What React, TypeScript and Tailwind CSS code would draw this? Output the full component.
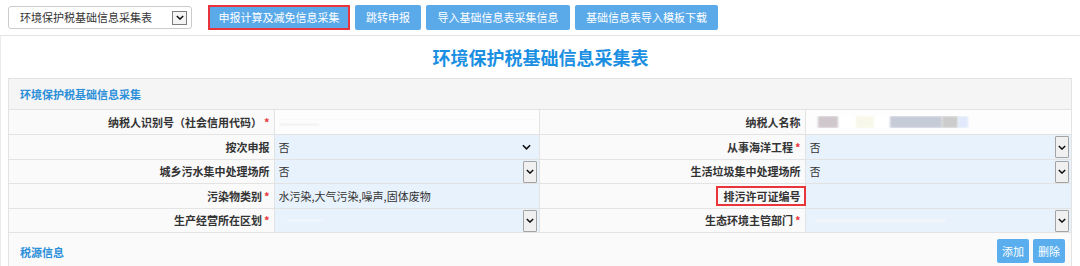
import React from 'react';

const Chevron = ({ className = '' }: { className?: string }) => (
  <svg viewBox="0 0 10 6" className={className} fill="none" stroke="#111" strokeWidth="1.8">
    <path d="M1 1l4 4 4-4" />
  </svg>
);

const BoxArrow = () => (
  <div className="w-[14px] h-[22px] border border-[#a3a3a3] bg-[#f0f0f0] flex items-center justify-center rounded-[1px]">
    <Chevron className="w-[8px] h-[5px]" />
  </div>
);

const Star = () => <span className="text-[#e8343a] ml-[2px]">*</span>;

type Cell = {
  label: React.ReactNode;
  star?: boolean;
  value?: React.ReactNode;
  kind?: 'blank' | 'text' | 'select' | 'plain';
  white?: boolean;
};

const Label = ({ cell }: { cell: Cell }) => (
  <div className="bg-[#fafafa] border-r border-[#e3e3e3] flex items-center justify-end pr-[4px] font-bold text-[#333]">
    {cell.label}
    {cell.star && <Star />}
  </div>
);

const Value = ({ cell, last }: { cell: Cell; last?: boolean }) => (
  <div
    className={`${cell.white ? 'bg-[#fdfdfd]' : 'bg-[#e8f2fc]'} ${last ? '' : 'border-r border-[#e3e3e3]'} flex items-center pl-[4px] pr-[2px] relative`}
  >
    <div className="flex-1 truncate">{cell.value}</div>
    {cell.kind === 'select' && <BoxArrow />}
    {cell.kind === 'plain' && <Chevron className="w-[9px] h-[6px] mr-[6px]" />}
  </div>
);

const rows: { h: string; left: Cell; right: Cell }[] = [
  {
    h: 'h-[25px]',
    left: {
      label: '纳税人识别号（社会信用代码）',
      star: true,
      white: true,
      value: (
        <div className="flex flex-col gap-[6px] -mt-[4px]">
          <div className="h-[3px] w-[290px] bg-[#e4e4e4] blur-[1.5px]" />
          <div className="h-[2px] w-[40px] bg-[#eeeeee] blur-[1px]" />
        </div>
      ),
    },
    right: {
      label: '纳税人名称',
      white: true,
      value: (
        <div className="flex items-center gap-0 ml-[8px]">
          <div className="w-[20px] h-[12px] bg-[#cfc7cc] blur-[1px]" />
          <div className="w-[18px] h-[12px] bg-[#ffffff]" />
          <div className="w-[18px] h-[12px] bg-[#f8f8ea] blur-[1px]" />
          <div className="w-[16px] h-[12px] bg-[#ffffff]" />
          <div className="w-[52px] h-[12px] bg-[#c6cbd8] blur-[1px]" />
          <div className="w-[16px] h-[12px] bg-[#cccccc] blur-[1px]" />
          <div className="w-[10px] h-[12px] bg-[#dfe9fb] blur-[1px]" />
        </div>
      ),
    },
  },
  {
    h: 'h-[25px]',
    left: { label: '按次申报', value: '否', kind: 'plain' },
    right: { label: '从事海洋工程', star: true, value: '否', kind: 'select' },
  },
  {
    h: 'h-[24px]',
    left: { label: '城乡污水集中处理场所', value: '否', kind: 'select' },
    right: { label: '生活垃圾集中处理场所', value: '否', kind: 'select' },
  },
  {
    h: 'h-[25px]',
    left: { label: '污染物类别', star: true, value: '水污染,大气污染,噪声,固体废物' },
    right: {
      label: (
        <span className="border-2 border-[#e8343a] pl-[6px] pr-[3px] leading-[14px] py-[1px] -mr-[5px]">排污许可证编号</span>
      ),
    },
  },
  {
    h: 'h-[24px]',
    left: {
      label: '生产经营所在区划',
      star: true,
      kind: 'select',
      value: <div className="h-[3px] w-[36px] ml-[8px] bg-[#f2f6fb] blur-[1px]" />,
    },
    right: {
      label: '生态环境主管部门',
      star: true,
      kind: 'select',
      value: <div className="h-[4px] w-[130px] ml-[6px] bg-[#f3f6fa] blur-[1.5px]" />,
    },
  },
];

const TopButton = ({ w, children }: { w: string; children: React.ReactNode }) => (
  <button className={`${w} h-[25px] bg-[#5aaaea] text-white rounded-[2px] text-[11px]`}>{children}</button>
);

export default function App() {
  return (
    <div className="w-[1080px] h-[266px] overflow-hidden bg-white text-[11px] text-[#333] font-['Noto_Sans_CJK_SC',sans-serif]">
      {/* Toolbar */}
      <div className="h-[36px] border-b border-[#e3e3e3] flex items-center pl-[8px] gap-[5px]">
        <div className="w-[184px] h-[23px] border border-[#cbcbcb] rounded-[3px] flex items-center justify-between pl-[11px] pr-[4px] mr-[11px]">
          <span>环境保护税基础信息采集表</span>
          <div className="w-[15px] h-[14px] border border-[#7d7d7d] bg-[#f4f4f4] flex items-center justify-center">
            <Chevron className="w-[8px] h-[5px]" />
          </div>
        </div>
        <div className="w-[142px] h-[25px] border-2 border-[#e8343a] bg-[#5aaaea] text-white flex items-center justify-center">
          申报计算及减免信息采集
        </div>
        <TopButton w="w-[66px]">跳转申报</TopButton>
        <TopButton w="w-[144px]">导入基础信息表采集信息</TopButton>
        <TopButton w="w-[143px]">基础信息表导入模板下载</TopButton>
      </div>

      <div className="border-l border-[#ebebeb] h-[230px]">
        {/* Title */}
        <div className="h-[42px] flex items-center justify-center text-[18px] font-bold text-[#1b8fe2]">
          环境保护税基础信息采集表
        </div>

        {/* Panel */}
        <div className="ml-[7px] w-[1064px] border border-[#e3e3e3]">
          <div className="h-[31px] bg-[#f5f5f5] border-b border-[#e3e3e3] flex items-center pl-[11px] font-bold text-[#2b8fd9]">
            环境保护税基础信息采集
          </div>
          {rows.map((r, i) => (
            <div key={i} className={`grid grid-cols-4 border-b border-[#e3e3e3] ${r.h}`}>
              <Label cell={r.left} />
              <Value cell={r.left} />
              <Label cell={r.right} />
              <Value cell={r.right} last />
            </div>
          ))}
          <div className="h-[40px] bg-[#fafafa] flex items-start justify-between pl-[11px] pr-[6px] pt-[6px]">
            <span className="font-bold text-[#2b8fd9] mt-[5px]">税源信息</span>
            <div className="flex gap-[4px]">
              <button className="w-[32px] h-[24px] bg-[#5aaeee] text-white rounded-[2px]">添加</button>
              <button className="w-[32px] h-[24px] bg-[#5aaeee] text-white rounded-[2px]">删除</button>
            </div>
          </div>
        </div>
      </div>
    </div>
  );
}
